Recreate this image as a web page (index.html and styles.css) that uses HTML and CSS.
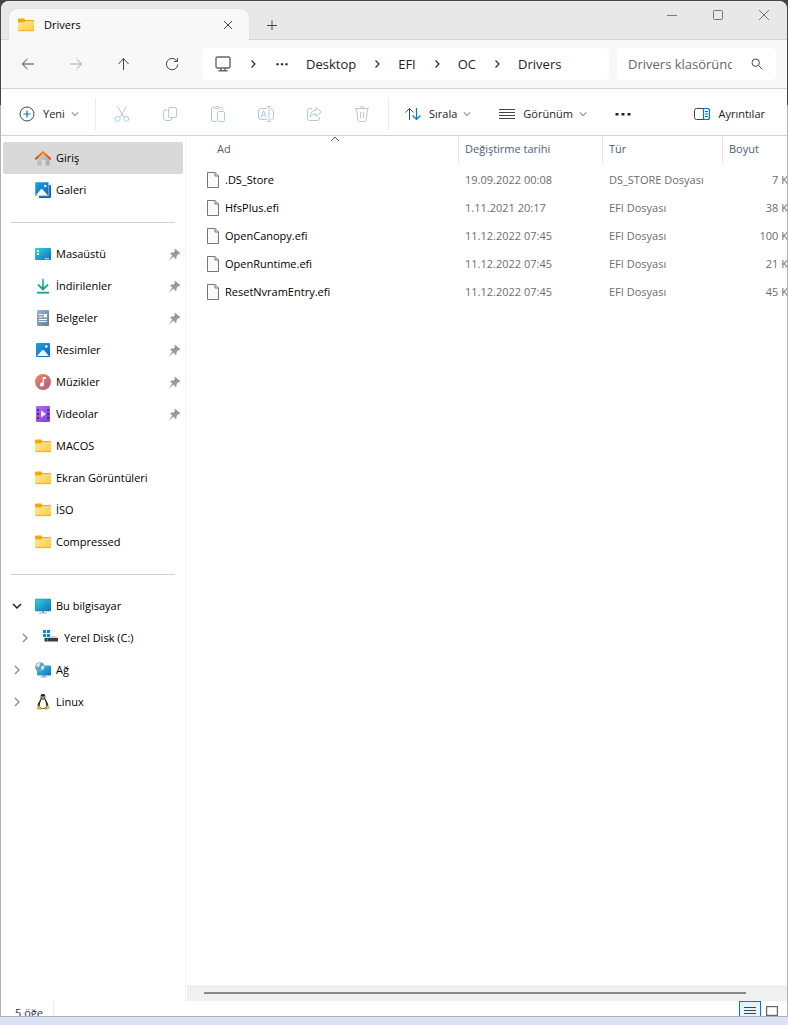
FILE: index.html
```html
<!DOCTYPE html>
<html lang="tr">
<head>
<meta charset="utf-8">
<meta name="viewport" content="width=device-width, initial-scale=1">
<title>Drivers</title>
<link rel="stylesheet" href="styles.css">
</head>
<body>
<svg class="defs" aria-hidden="true">
  <defs>
    <linearGradient id="gFolder" x1="0" y1="0" x2="1" y2="1"><stop offset="0" stop-color="#ffe9a2"/><stop offset="1" stop-color="#fdc93b"/></linearGradient>
    <linearGradient id="gBlue" x1="0" y1="0" x2="1" y2="1"><stop offset="0" stop-color="#1ea0ec"/><stop offset="1" stop-color="#0b68b8"/></linearGradient>
    <linearGradient id="gTeal" x1="0" y1="0" x2="1" y2="1"><stop offset="0" stop-color="#35d4dc"/><stop offset="1" stop-color="#0b6fc4"/></linearGradient>
    <linearGradient id="gHome" x1="0" y1="0" x2="1" y2="1"><stop offset="0" stop-color="#d8d8d8"/><stop offset="1" stop-color="#a4a4a4"/></linearGradient>
    <linearGradient id="gRoof" x1="0" y1="0" x2="0" y2="1"><stop offset="0" stop-color="#f5920a"/><stop offset="1" stop-color="#d4491c"/></linearGradient>
    <linearGradient id="gDown" x1="0" y1="0" x2="0" y2="1"><stop offset="0" stop-color="#35cf9a"/><stop offset="1" stop-color="#0d9d8c"/></linearGradient>
    <linearGradient id="gDoc" x1="0" y1="0" x2="1" y2="1"><stop offset="0" stop-color="#9fb6cd"/><stop offset="1" stop-color="#5d7c9e"/></linearGradient>
    <linearGradient id="gMusic" x1="0" y1="0" x2="1" y2="1"><stop offset="0" stop-color="#f08a4c"/><stop offset="1" stop-color="#b0569e"/></linearGradient>
    <linearGradient id="gVideo" x1="0" y1="0" x2="1" y2="1"><stop offset="0" stop-color="#b36cf2"/><stop offset="1" stop-color="#7a3ed6"/></linearGradient>
  </defs>
  <symbol id="folder" viewBox="0 0 16 16"><path d="M0 2.5Q0 1.5 1 1.5H6L7.5 3H15Q16 3 16 4V13H0Z" fill="#f3a90c"/><path d="M0 5.6H5.7L7.6 4H15Q16 4 16 5V13Q16 14 15 14H1Q0 14 0 13Z" fill="url(#gFolder)"/><path d="M.3 13.7H15.7" stroke="#e8a416" stroke-width=".8"/></symbol>
  <symbol id="home" viewBox="0 0 16 16"><path d="M2 7.5L8 2L14.5 7.5V14.5Q14.5 15.500 13.500 15.500H10.500V10H6.500V15.500H3Q2 15.500 2 14.500Z" fill="url(#gHome)"/><path d="M.8 8.800L8 2L15.200 8.800" fill="none" stroke="url(#gRoof)" stroke-width="1.900" stroke-linecap="round" stroke-linejoin="round"/></symbol>
  <symbol id="gallery" viewBox="0 0 16 16"><path d="M4 3H15Q16 3 16 4V14.500Q16 16 14.500 16H4Z" fill="#0e62b0"/><path d="M0 1Q0 0 1 0H12.500Q13.800 0 13.800 1V13.800H0Z" fill="url(#gBlue)" stroke="#fff" stroke-width=".5"/><path d="M.8 13.500L5.700 7.500Q6.700 6.500 7.700 7.500L13 13.500Z" fill="#f2f9ff"/><circle cx="10.300" cy="4" r="1.200" fill="#fff"/></symbol>
  <symbol id="desktop" viewBox="0 0 16 16"><rect y="2" width="16" height="12" rx="1" fill="url(#gTeal)"/><path d="M2 4h2v2H2zM2 7h2v2H2z" fill="#d8ffff"/><path d="M10 12h1.500v1.200H10zM12.300 12h1.500v1.200h-1.500z" fill="#eaf6ff"/></symbol>
  <symbol id="download" viewBox="0 0 16 16"><path d="M8 .8V11.200M3 6.500L8 11.500L13 6.500" fill="none" stroke="url(#gDown)" stroke-width="1.800"/><rect x="2" y="13.800" width="12" height="1.800" fill="#16a28d"/></symbol>
  <symbol id="document" viewBox="0 0 16 16"><rect x="2" y="0" width="12" height="16" rx="1" fill="url(#gDoc)"/><path d="M4 4.500H7.500M4 7H7.500M4 9.500H12M4 11.500H12" stroke="#fff" stroke-width="1.200"/><path d="M8.700 4h3.300v3.500H8.700z" fill="#fff"/></symbol>
  <symbol id="picture" viewBox="0 0 16 16"><rect x="1" y="1" width="14" height="14" rx="1" fill="url(#gBlue)"/><path d="M2 14L7 8.300Q8 7.500 9 8.300L14 14Z" fill="#f2f9ff"/><circle cx="11.300" cy="4.500" r="1.300" fill="#fff"/></symbol>
  <symbol id="music" viewBox="0 0 16 16"><circle cx="8" cy="8" r="8" fill="url(#gMusic)"/><path d="M7.700 3H11V5H9V10.500A2 2 0 1 1 7.700 8.700Z" fill="#fff"/></symbol>
  <symbol id="video" viewBox="0 0 16 16"><rect x="1" y="0" width="14" height="16" rx="1" fill="url(#gVideo)"/><path d="M2 3h2v2H2zM2 7h2v2H2zM2 11h2v2H2zM12 3h2v2h-2zM12 7h2v2h-2zM12 11h2v2h-2z" fill="#4d2392"/><path d="M6 4.500L11.200 8L6 11.500Z" fill="#f3eaff"/></symbol>
  <symbol id="pc" viewBox="0 0 16 16"><path d="M7 12H9V14.500H12V15.500H4V14.500H7Z" fill="#9baab5"/><rect y="1" width="16" height="12" rx="1" fill="url(#gTeal)" stroke="#1577ab" stroke-width=".5"/></symbol>
  <symbol id="disk" viewBox="0 0 16 16"><path d="M0 0H3V3H0ZM4 0H7V3H4ZM0 4H3V7H0ZM4 4H7V7H4Z" fill="#0a8be0"/><path d="M2.500 8L9 6H13.500L15 8.500H2Z" fill="#d0d0d0"/><rect x="1.500" y="8" width="13.500" height="3.500" fill="#393d40"/><path d="M4 9h1v1.500H4z" fill="#3bd36f"/></symbol>
  <symbol id="network" viewBox="0 0 16 16"><path d="M8 13H10V14.500H12V15.500H5.500V14.500H8Z" fill="#9baab5"/><rect x="2" y="3.500" width="14" height="10" rx=".8" fill="url(#gTeal)"/><circle cx="5" cy="5" r="4.800" fill="#5da3c8"/><path d="M1 4Q2 .8 5.500.8L5 3L3.500 5.500ZM6 5L8.500 3L9.300 5.500L7.500 8L6.300 7Z" fill="#d6eaf3"/></symbol>
  <symbol id="linux" viewBox="0 0 16 16"><path d="M8 0C5.500 0 5.500 2 5.700 4C5.700 6 2.600 8.500 2.600 12L4 15H12L13.400 12C13.400 8.500 10.300 6 10.300 4C10.500 2 10.500 0 8 0Z" fill="#252525"/><path d="M6.400 5L8 6L9.600 5C10 7.500 11.300 9 11.300 11.500Q10.500 14.500 8 14.500Q5.500 14.500 4.700 11.500C4.700 9 6 7.500 6.400 5Z" fill="#fff"/><path d="M6.200 3.800L8 3L9.800 3.800L8 5.300ZM3.500 11.300L6.500 14.500Q6 16.200 4 15.700L1.500 15Q1.500 13 3.500 11.300ZM12.500 11.300L14.800 14L12 15.800Q10 16.300 9.900 14.500Z" fill="#e6b532"/><path d="M6.500 2h.8v1.200h-.8zM8.700 2h.8v1.200h-.8z" fill="#fff"/></symbol>
  <symbol id="pin" viewBox="0 0 12 12"><path d="M6.300.8L11.300 5.300L10.500 6.200L9.300 6L7.500 8.200L7.700 10L6.700 10.900L4.300 8.600L1.200 11.400L.6 10.900L3.300 7.600L1.200 5.400L2.200 4.600L4 4.700L6 2.900L5.500 1.700Z" fill="#8f9ba5"/></symbol>
  <symbol id="right" viewBox="0 0 10 10"><path d="M3 1L7 5L3 9" fill="none" stroke="currentColor" stroke-width="1.300"/></symbol>
  <symbol id="crumb" viewBox="0 0 10 10"><path d="M3.500 1.500L7 5L3.500 8.500" fill="none" stroke="currentColor" stroke-width="1.100"/></symbol>
  <symbol id="down" viewBox="0 0 10 10"><path d="M1 3L5 7L9 3" fill="none" stroke="currentColor" stroke-width="1.500"/></symbol>
  <symbol id="dots" viewBox="0 0 16 16"><path d="M.5 7h3v2.600h-3zM6.500 7h3v2.600h-3zM12.500 7h3v2.600h-3z" fill="#222"/></symbol>
  <symbol id="file" viewBox="0 0 12 16"><path d="M.5.5H8L11.500 4V15.500H.5Z" fill="#fafafa" stroke="#777"/><path d="M8 .5V4H11.500" fill="none" stroke="#777"/></symbol>
</svg>

<div class="window">
  <header class="titlebar">
    <div class="tab">
      <svg class="i16"><use href="#folder"/></svg>
      <span class="tab-title">Drivers</span>
      <button class="tab-btn" aria-label="Sekmeyi kapat"><svg class="line i10" viewBox="0 0 10 10"><path d="M1 1L9 9M9 1L1 9"/></svg></button>
    </div>
    <button class="new-tab" aria-label="Yeni sekme"><svg class="line i10" viewBox="0 0 10 10"><path d="M0 5.500H10M5 .5V10"/></svg></button>
    <div class="caption">
      <button aria-label="Simge durumuna küçült"><svg class="line i10" viewBox="0 0 10 10"><path d="M0 5.500H10"/></svg></button>
      <button aria-label="Ekranı kapla"><svg class="line i10" viewBox="0 0 10 10"><rect x=".5" y=".5" width="9" height="9" rx="1"/></svg></button>
      <button aria-label="Kapat"><svg class="line i10" viewBox="0 0 10 10"><path d="M0 0L10 10M10 0L0 10"/></svg></button>
    </div>
  </header>

  <div class="navbar">
    <div class="nav-buttons">
      <button aria-label="Geri"><svg class="line i16" viewBox="0 0 16 16"><path d="M14 8H2.500M7.500 3L2.300 8L7.500 13"/></svg></button>
      <button class="off" disabled aria-label="İleri"><svg class="line i16" viewBox="0 0 16 16"><path d="M2 8H13.500M8.500 3L13.700 8L8.500 13"/></svg></button>
      <button aria-label="Yukarı"><svg class="line i16" viewBox="0 0 16 16"><path d="M7.500 14V2.500M2.500 8L7.500 2.500L12.500 8"/></svg></button>
      <button aria-label="Yenile"><svg class="line i16" viewBox="0 0 16 16"><path d="M12.700 4.700A5.700 5.700 0 1 0 13.800 8.500M13.500 2V5.500H10"/></svg></button>
    </div>
    <nav class="address" aria-label="Adres">
      <a href="#" class="address-pc" aria-label="Bu bilgisayar"><svg class="i16 thick" viewBox="0 0 16 16"><rect x="1" y="1" width="14" height="11" rx="1.500"/><path d="M6 12V14.500M10 12V14.500M3.500 14.700H12.500"/></svg></a>
      <svg class="i10"><use href="#crumb"/></svg>
      <a href="#" class="address-more" aria-label="Diğer"><svg class="i12"><use href="#dots"/></svg></a>
      <a href="#">Desktop</a>
      <svg class="i10"><use href="#crumb"/></svg>
      <a href="#">EFI</a>
      <svg class="i10"><use href="#crumb"/></svg>
      <a href="#">OC</a>
      <svg class="i10"><use href="#crumb"/></svg>
      <a href="#">Drivers</a>
    </nav>
    <div class="search">
      <input type="text" placeholder="Drivers klasöründe ara" aria-label="Drivers klasöründe ara">
      <button aria-label="Ara"><svg class="line i12" viewBox="0 0 12 12"><circle cx="4.700" cy="4.700" r="3.700"/><path d="M7.500 7.500L11.300 11.300"/></svg></button>
    </div>
  </div>

  <div class="commands">
    <button class="cmd cmd-new"><svg class="i16 line" viewBox="0 0 16 16"><circle cx="8" cy="8" r="7"/><path class="accent" d="M4.500 8H11.500M8 4.500V11.500"/></svg>Yeni<svg class="chev"><use href="#down"/></svg></button>
    <div class="tools">
      <button disabled aria-label="Kes"><svg class="tool" viewBox="0 0 16 16"><path d="M3.500.5L10 11M12.500.5L6 11"/><g class="accent"><circle cx="3.700" cy="12.800" r="2.500"/><circle cx="12.300" cy="12.800" r="2.500"/></g></svg></button>
      <button disabled aria-label="Kopyala"><svg class="tool" viewBox="0 0 16 16"><path d="M5 4H3Q1.500 4 1.500 6V12Q1.500 14.500 4 14.500H8Q9.500 14.500 10 12"/><rect class="accent" x="6.500" y="1.500" width="8" height="10" rx="1.500"/></svg></button>
      <button disabled aria-label="Yapıştır"><svg class="tool" viewBox="0 0 16 16"><path d="M4.500 1.500H2.500Q1.500 1.500 1.500 3V14Q1.500 15.500 3 15.500H6.500M9.500 1.500H11.500Q12.500 1.500 12.500 4"/><rect x="4.500" y=".5" width="5" height="2" rx="1"/><rect class="accent" x="7.500" y="5.500" width="7" height="10" rx="1"/></svg></button>
      <button disabled aria-label="Yeniden adlandır"><svg class="tool" viewBox="0 0 16 16"><path d="M9 2.500H3Q.5 2.500 .5 5V11Q.5 13.500 3 13.500H9M13 2.500Q15.500 3 15.500 5V11Q15.500 13.500 13 13.500"/><path class="accent" d="M3 11.500L5.500 4.500L8 11.500M4 9H7M9 .5H13M11 .5V15.500M9 15.500H13"/></svg></button>
      <button disabled aria-label="Paylaş"><svg class="tool" viewBox="0 0 16 16"><path d="M6 2.500H3.500Q1.500 2.500 1.500 4.500V12.500Q1.500 14.500 3.500 14.500H11.500Q13.500 14.500 13.500 12.500V11"/><path class="accent" d="M10 1.500L15 6L10 10.500V8Q6.500 7.500 4 11Q4.500 4.500 10 4.200Z"/></svg></button>
      <button disabled aria-label="Sil"><svg class="tool" viewBox="0 0 16 16"><path d="M1 2.500H15M6 2.500Q6 .5 8 .5Q10 .5 10 2.500M2.500 2.500L3.800 14Q4 15.500 5.500 15.500H10.500Q12 15.500 12.200 14L13.500 2.500M6.500 6V12M9.500 6V12"/></svg></button>
    </div>
    <button class="cmd cmd-sort"><svg class="i16 line" viewBox="0 0 16 16"><path d="M4.500 14V2.500M.5 6.500L4.500 2.500L8.500 6.500"/><path class="accent" d="M11.500 2V13.500M7.500 9.500L11.500 13.500L15.500 9.500"/></svg>Sırala<svg class="chev"><use href="#down"/></svg></button>
    <button class="cmd cmd-view"><svg class="i16 line" viewBox="0 0 16 16"><path d="M0 3.500H16M0 6.500H16M0 9.500H16M0 12.500H16"/></svg>Görünüm<svg class="chev"><use href="#down"/></svg></button>
    <button class="cmd cmd-more" aria-label="Daha fazla"><svg class="i16"><use href="#dots"/></svg></button>
    <button class="cmd cmd-details"><svg class="i16 line" viewBox="0 0 16 16"><rect x=".5" y="2.500" width="15" height="11" rx="2"/><path class="accent fill" d="M9.500 2.500H13.500Q15.500 2.500 15.500 4.500V11.500Q15.500 13.500 13.500 13.500H9.500Z"/><path class="accent" d="M11 5.500H14M11 8H14M11 10.500H14"/></svg>Ayrıntılar</button>
  </div>

  <div class="content">
    <nav class="sidebar" aria-label="Gezinti bölmesi">
      <ul>
        <li><a href="#" class="current"><svg class="i16"><use href="#home"/></svg>Giriş</a></li>
        <li><a href="#"><svg class="i16"><use href="#gallery"/></svg>Galeri</a></li>
      </ul>
      <hr>
      <ul>
        <li><a href="#"><svg class="i16"><use href="#desktop"/></svg>Masaüstü<svg class="pin"><use href="#pin"/></svg></a></li>
        <li><a href="#"><svg class="i16"><use href="#download"/></svg>İndirilenler<svg class="pin"><use href="#pin"/></svg></a></li>
        <li><a href="#"><svg class="i16"><use href="#document"/></svg>Belgeler<svg class="pin"><use href="#pin"/></svg></a></li>
        <li><a href="#"><svg class="i16"><use href="#picture"/></svg>Resimler<svg class="pin"><use href="#pin"/></svg></a></li>
        <li><a href="#"><svg class="i16"><use href="#music"/></svg>Müzikler<svg class="pin"><use href="#pin"/></svg></a></li>
        <li><a href="#"><svg class="i16"><use href="#video"/></svg>Videolar<svg class="pin"><use href="#pin"/></svg></a></li>
        <li><a href="#"><svg class="i16"><use href="#folder"/></svg>MACOS</a></li>
        <li><a href="#"><svg class="i16"><use href="#folder"/></svg>Ekran Görüntüleri</a></li>
        <li><a href="#"><svg class="i16"><use href="#folder"/></svg>İSO</a></li>
        <li><a href="#"><svg class="i16"><use href="#folder"/></svg>Compressed</a></li>
      </ul>
      <hr>
      <ul>
        <li><a href="#" class="branch open"><svg class="i10"><use href="#down"/></svg><svg class="i16"><use href="#pc"/></svg>Bu bilgisayar</a></li>
        <li><a href="#" class="branch nested"><svg class="i10"><use href="#right"/></svg><svg class="i16"><use href="#disk"/></svg>Yerel Disk (C:)</a></li>
        <li><a href="#" class="branch"><svg class="i10"><use href="#right"/></svg><svg class="i16"><use href="#network"/></svg>Ağ</a></li>
        <li><a href="#" class="branch"><svg class="i10"><use href="#right"/></svg><svg class="i16"><use href="#linux"/></svg>Linux</a></li>
      </ul>
    </nav>
    <main class="files">
      <div class="list">
        <table>
          <colgroup><col class="c-name"><col class="c-date"><col class="c-type"><col class="c-size"></colgroup>
          <thead>
            <tr>
              <th aria-sort="ascending"><button>Ad<svg class="sort" viewBox="0 0 10 6"><path d="M1 5L5 1L9 5"/></svg></button></th>
              <th><button>Değiştirme tarihi</button></th>
              <th><button>Tür</button></th>
              <th><button>Boyut</button></th>
            </tr>
          </thead>
          <tbody>
            <tr><td><span class="name"><svg><use href="#file"/></svg>.DS_Store</span></td><td>19.09.2022 00:08</td><td>DS_STORE Dosyası</td><td>7 KB</td></tr>
            <tr><td><span class="name"><svg><use href="#file"/></svg>HfsPlus.efi</span></td><td>1.11.2021 20:17</td><td>EFI Dosyası</td><td>38 KB</td></tr>
            <tr><td><span class="name"><svg><use href="#file"/></svg>OpenCanopy.efi</span></td><td>11.12.2022 07:45</td><td>EFI Dosyası</td><td>100 KB</td></tr>
            <tr><td><span class="name"><svg><use href="#file"/></svg>OpenRuntime.efi</span></td><td>11.12.2022 07:45</td><td>EFI Dosyası</td><td>21 KB</td></tr>
            <tr><td><span class="name"><svg><use href="#file"/></svg>ResetNvramEntry.efi</span></td><td>11.12.2022 07:45</td><td>EFI Dosyası</td><td>45 KB</td></tr>
          </tbody>
        </table>
      </div>
      <div class="scrollbar"><div class="thumb"></div></div>
    </main>
  </div>

  <footer class="status">
    <span class="count">5 öğe</span>
    <div class="modes">
      <button class="active" aria-label="Ayrıntılar görünümü"><svg class="line i12" viewBox="0 0 12 12"><path d="M0 1.500H12M0 4.500H12M0 7.500H12M0 10.500H12"/></svg></button>
      <button aria-label="Büyük simgeler"><svg class="i12 thick" viewBox="0 0 12 12"><rect x=".5" y=".5" width="11" height="9"/></svg></button>
    </div>
  </footer>
</div>
</body>
</html>
```
FILE: styles.css
```css
* { box-sizing: border-box; }
html, body { height: 100%; }
body {
  margin: 0;
  padding: 1px 1px 8px;
  overflow: hidden;
  font: 11px/16px "Open Sans", "Noto Sans", sans-serif;
  color: #000;
  background: linear-gradient(to bottom, #4a4648 0, #4a4648 105px, #b0b0b6 105px, #b0b0b6 calc(100% - 8px), #dbe4f5 calc(100% - 8px));
}
button { font: inherit; color: inherit; border: 0; padding: 0; background: none; display: flex; align-items: center; justify-content: center; }
a { color: inherit; text-decoration: none; }
svg { flex: none; display: block; }
.defs { position: absolute; width: 0; height: 0; }
.i10 { width: 10px; height: 10px; }
.i12 { width: 12px; height: 12px; }
.i16 { width: 16px; height: 16px; }
.line { fill: none; stroke: #444; stroke-width: 1; }
.thick { fill: none; stroke: #666; stroke-width: 1.4; }
.line .accent { stroke: #0078d4; stroke-width: 1.2; }
.line .fill { fill: #eaf5fd; }

.window { height: 100%; display: flex; flex-direction: column; background: #fff; border-radius: 8px 8px 0 0; border-bottom: 1px solid #b0b0b8; overflow: hidden; }

.titlebar { flex: none; height: 39px; padding-left: 8px; display: flex; background: #e8e8e8; box-shadow: inset 0 -1px #d4d4d4; }
.tab { width: 240px; margin-top: 8px; padding: 0 11px 0 9px; display: flex; align-items: center; gap: 10px; background: #f8f8f8; border-radius: 8px 8px 0 0; box-shadow: 0 0 1px #bbb; clip-path: inset(-1px -1px 0 -1px); }
.tab-title { flex: 1; }
.tab-btn { width: 20px; height: 20px; }
.new-tab { width: 46px; padding-top: 8px; }
.caption { margin-left: auto; display: flex; height: 28px; }
.caption button { width: 46px; }
.caption .line { stroke: #777; }

.navbar { flex: none; height: 49px; padding: 8px 11px 8px 3px; display: flex; gap: 8px; background: #f8f8f8; border-bottom: 1px solid #d2d2d2; font-size: 13px; }
.nav-buttons { display: flex; width: 190px; }
.nav-buttons button { flex: none; width: 48px; }
.off { opacity: .45; }
.address { flex: 1; min-width: 0; display: flex; align-items: center; gap: 16px; padding-left: 13px; background: #fff; border-radius: 5px; color: #222; white-space: nowrap; }
.address-pc { padding-right: 1px; }
.address-more { padding: 0 2px; }
.search { width: 159px; padding: 0 13px 0 11px; display: flex; align-items: center; gap: 19px; background: #fff; border-radius: 5px; }
.search input { flex: 1; min-width: 0; padding: 0; border: 0; outline: 0; background: none; font: inherit; color: #666; }
.search input::placeholder { color: #666; opacity: 1; }

.commands { flex: none; height: 47px; padding: 9px 22px 6px 18px; display: flex; align-items: center; border-bottom: 1px solid #d2d2d2; color: #222; }
.cmd { gap: 8px; height: 32px; white-space: nowrap; }
.cmd-new { width: 60px; justify-content: flex-start; }
.chev { width: 8px; height: 8px; margin-left: -2px; color: #999; }
.tools { display: flex; margin-left: 16px; padding: 0 2px; border: solid #ececec; border-width: 0 1px; }
.tools button { width: 48px; height: 32px; }
.tool { width: 16px; height: 16px; fill: none; stroke: #c4c4c4; }
.tool .accent { stroke: #a5d0f1; }
.cmd-sort { margin-left: 16px; }
.cmd-view { margin-left: 28px; }
.cmd-more { margin-left: 28px; }
.cmd-details { margin-left: auto; }

.content { flex: 1; min-height: 0; display: flex; }
.sidebar { flex: none; width: 185px; padding: 6px 2px 0 2px; border-right: 1px solid #f0f0f0; overflow: hidden; }
.sidebar ul { margin: 0; padding: 0; list-style: none; }
.sidebar hr { height: 1px; margin: 16px 8px 15px 8px; border: 0; background: #d0d0d0; }
.sidebar a { height: 32px; padding: 0 2px 0 32px; display: flex; align-items: center; gap: 5px; border-radius: 2px; white-space: nowrap; }
.sidebar .current { background: #d9d9d9; }
.pin { width: 12px; height: 12px; margin-left: auto; }
.sidebar .branch { padding-left: 9px; }
.sidebar .nested { padding-left: 17px; }
.branch .i10 { color: #888; margin-right: 8px; }
.branch.open .i10 { color: #222; }
.files { flex: 1; min-width: 0; display: flex; flex-direction: column; padding-left: 1px; }
.list { flex: 1; min-height: 0; overflow: hidden; padding-left: 17px; }
table { width: 100%; min-width: 597px; table-layout: fixed; border-collapse: separate; border-spacing: 0; white-space: nowrap; }
.c-name { width: 255px; }
.c-date { width: 144px; }
.c-type { width: 120px; }
thead::after { content: ""; display: block; height: 4px; }
th { padding: 0; border-right: 1px solid #e4e4e4; font-weight: 400; color: #4c607a; }
th:last-child { border-right: 0; }
th:first-child { padding-left: 7px; }
th button { position: relative; width: 100%; height: 26px; padding-left: 6px; justify-content: flex-start; }
.sort { position: absolute; top: 0; left: 50%; margin-left: -5px; width: 10px; height: 6px; fill: none; stroke: #555; }
td { height: 28px; padding: 0 6px; color: #6d6d6d; }
td:first-child { padding-left: 3px; color: #000; }
td:last-child { text-align: right; }
.name { display: flex; align-items: center; gap: 6px; }
.name svg { width: 12px; height: 16px; }
.scrollbar { flex: none; height: 16px; padding: 7px 41px 7px 17px; background: #f0f0f0; }
.thumb { height: 2px; background: #888; }

.status { flex: none; height: 15px; padding: 0 9px 0 14px; display: flex; align-items: flex-start; overflow: hidden; color: #1e395b; }
.count { height: 24px; padding: 4px 10px 0 0; border-right: 1px solid #ececec; }
.modes { margin-left: auto; display: flex; gap: 5px; }
.modes button { height: 22px; }
.modes .active { width: 22px; background: #e5f3fb; border: 1px solid #0078d4; }
```
